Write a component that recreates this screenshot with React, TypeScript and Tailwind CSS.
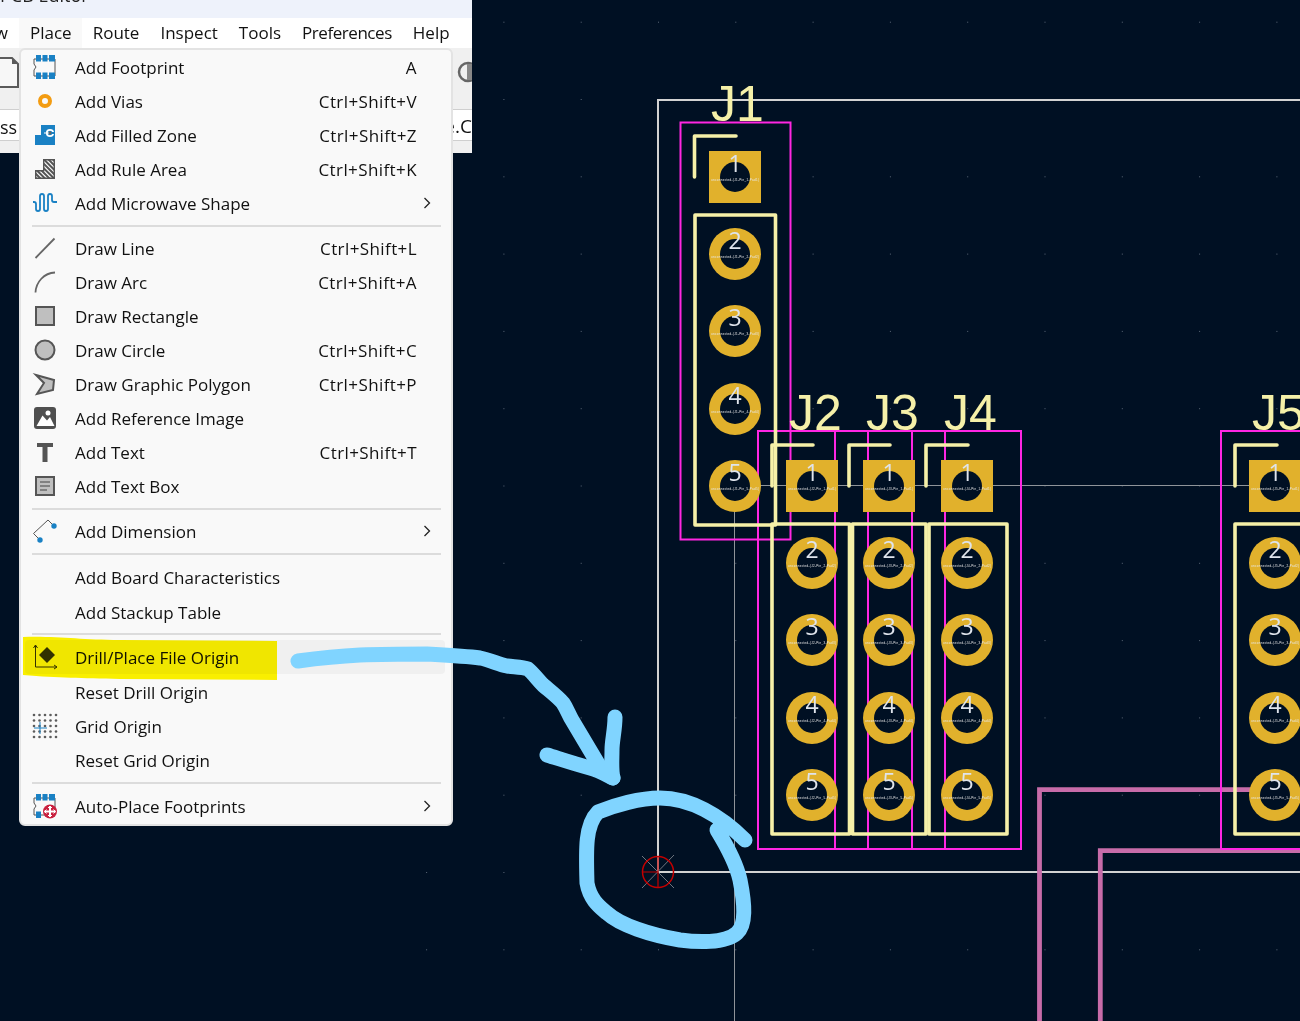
const FONT = "font-['Open_Sans',sans-serif]";

type Row = { label: string; keys?: string; icon?: string; arrow?: boolean; hot?: boolean };

const groups: Row[][] = [
  [
    { label: "Add Footprint", keys: "A", icon: "footprint" },
    { label: "Add Vias", keys: "Ctrl+Shift+V", icon: "via" },
    { label: "Add Filled Zone", keys: "Ctrl+Shift+Z", icon: "zone" },
    { label: "Add Rule Area", keys: "Ctrl+Shift+K", icon: "rule" },
    { label: "Add Microwave Shape", icon: "wave", arrow: true },
  ],
  [
    { label: "Draw Line", keys: "Ctrl+Shift+L", icon: "line" },
    { label: "Draw Arc", keys: "Ctrl+Shift+A", icon: "arc" },
    { label: "Draw Rectangle", icon: "rect" },
    { label: "Draw Circle", keys: "Ctrl+Shift+C", icon: "circle" },
    { label: "Draw Graphic Polygon", keys: "Ctrl+Shift+P", icon: "poly" },
    { label: "Add Reference Image", icon: "image" },
    { label: "Add Text", keys: "Ctrl+Shift+T", icon: "text" },
    { label: "Add Text Box", icon: "textbox" },
  ],
  [{ label: "Add Dimension", icon: "dim", arrow: true }],
  [{ label: "Add Board Characteristics" }, { label: "Add Stackup Table" }],
  [
    { label: "Drill/Place File Origin", icon: "drill", hot: true },
    { label: "Reset Drill Origin" },
    { label: "Grid Origin", icon: "grid" },
    { label: "Reset Grid Origin" },
  ],
  [{ label: "Auto-Place Footprints", icon: "auto", arrow: true }],
];

function MenuIcon({ name }: { name?: string }) {
  const gray = "#555";
  const blue = "#1a81c4";
  const gridAt = [2, 7.5, 13, 18.5, 24];
  const hatch = [-22, -17.5, -13, -8.5, -4, 0.5, 5, 9.5, 14, 18.5];
  return (
    <svg width="26" height="26" viewBox="0 0 26 26">
      {(name === "footprint" || name === "auto") && (
        <>
          <path d="M2 5h21v17H2v-6l2-3-2-3z" fill="none" stroke={gray} strokeWidth="1" />
          <path d="M4 1h5v6.500H4zM10.500 1h5v6.500h-5zM17 1h6v6.500h-6zM4 18.500h5V25H4z" fill={blue} />
          {name === "footprint" && <path d="M10.500 18.500h5V25h-5zM17 18.500h6V25h-6z" fill={blue} />}
          {name === "auto" && (
            <>
              <circle cx="18" cy="18.500" r="7" fill="#c9213f" />
              <path d="M18 13v11M12.500 18.500h11" stroke="#fff" strokeWidth="2" />
              <path d="M16 15l2-2 2 2M16 22l2 2 2-2M14.500 16.500l-2 2 2 2M21.500 16.500l2 2-2 2" fill="none" stroke="#fff" strokeWidth="1" />
            </>
          )}
        </>
      )}
      {name === "via" && <circle cx="13" cy="13" r="5" fill="none" stroke="#f39c12" strokeWidth="4" />}
      {name === "zone" && (
        <>
          <path d="M3 23V13h6V3h14v20z" fill={blue} />
          <circle cx="18" cy="11" r="3.200" fill="none" stroke="#fff" strokeWidth="1.800" />
          <rect x="20" y="10" width="3" height="2" fill={blue} />
          <path d="M12 11h6" stroke="#fff" strokeWidth="1" />
          <circle cx="18" cy="11" r="1.400" fill="#666" />
        </>
      )}
      {name === "rule" && (
        <>
          <clipPath id="rule-clip">
            <path d="M3 23V14h8V3h12v20z" />
          </clipPath>
          <rect x="3" y="3" width="20" height="20" fill="#fff" clipPath="url(#rule-clip)" />
          <g clipPath="url(#rule-clip)" stroke={gray} strokeWidth="2">
            {hatch.map((c) => (
              <path key={c} d={`M0 ${c}L26 ${c + 26}`} />
            ))}
          </g>
          <path d="M3.700 22.300V14.700h8V3.700h10.600v18.600z" fill="none" stroke={gray} strokeWidth="1.400" />
        </>
      )}
      {name === "wave" && (
        <path d="M1 12h1q2 0 2 2v5q0 2 2 2t2-2V6q0-2 2-2t2 2v13q0 2 2 2t2-2V6q0-2 2-2t2 2v4q0 2 2 2h3" fill="none" stroke={blue} strokeWidth="1.800" />
      )}
      {name === "line" && <path d="M3.500 23L22.500 3.500" stroke="#666" strokeWidth="1.800" />}
      {name === "arc" && <path d="M3.500 23.500C4 13 12 4 23 3.500" fill="none" stroke="#666" strokeWidth="1.800" />}
      {name === "rect" && <rect x="4" y="4" width="18" height="18" fill="#bfbfbf" stroke={gray} strokeWidth="2" />}
      {name === "circle" && <circle cx="13" cy="13" r="9.500" fill="#bfbfbf" stroke={gray} strokeWidth="2" />}
      {name === "poly" && <path d="M4 4L22 9l-1 10-16 4 7-11z" fill="#bfbfbf" stroke={gray} strokeWidth="2" />}
      {name === "image" && (
        <>
          <rect x="2" y="2" width="22" height="22" rx="3" fill="#4f4f4f" />
          <path d="M4.500 21L10.500 10.500l4.500 5 3-3.500 4.500 9z" fill="#fff" />
          <circle cx="16" cy="8" r="2.500" fill="#fff" />
        </>
      )}
      {name === "text" && <path d="M5 4h16v4h-5.500v15h-5V8H5z" fill={gray} />}
      {name === "textbox" && (
        <>
          <rect x="4" y="4" width="18" height="18" fill="#bfbfbf" stroke={gray} strokeWidth="2" />
          <path d="M8 9h10M8 13h10M8 17h7" stroke="#444" strokeWidth="1.200" />
        </>
      )}
      {name === "dim" && (
        <>
          <path d="M16 2L1.500 15.500 8 22M16 2l6 6" fill="none" stroke={gray} strokeWidth="1" />
          <circle cx="22" cy="8" r="2.700" fill={blue} />
          <circle cx="8" cy="22" r="2.700" fill={blue} />
        </>
      )}
      {name === "drill" && (
        <>
          <path d="M3.500 1v22H25" fill="none" stroke="#333" strokeWidth="1" />
          <path d="M1.500 4l2-3 2 3M22 21l3 2-3 2" fill="none" stroke="#333" strokeWidth="1" />
          <path d="M15 3l8 8-8 8-8-8z" fill="#333" />
        </>
      )}
      {name === "grid" && (
        <>
          {gridAt.map((x) =>
            gridAt.map((y) => <circle key={`${x}-${y}`} cx={x} cy={y} r="1.300" fill="#5c5c5c" />),
          )}
          <path d="M8 9v12M2 15h13" stroke={blue} strokeWidth="1" />
        </>
      )}
    </svg>
  );
}

function MenuRow({ row, tall }: { row: Row; tall: boolean }) {
  return (
    <div className={`flex items-center pl-[3px] pr-[14px] ml-1 mr-[6px] rounded ${tall ? "h-[34.4px]" : "h-[34px]"} ${row.hot ? "bg-[#f0f0f0]" : ""}`}>
      <div className="w-[34px] h-[26px] flex justify-center items-center">{row.icon && <MenuIcon name={row.icon} />}</div>
      <span className="ml-[13px] mt-[2px] flex-1 whitespace-nowrap">{row.label}</span>
      {row.keys && <span className="mr-[14px] mt-[2px] tracking-[0.4px]">{row.keys}</span>}
      {row.arrow && (
        <svg width="10" height="14" viewBox="0 0 10 14" className="mr-[-1px]">
          <path d="M2.500 2l5 5-5 5" fill="none" stroke="#222" strokeWidth="1.300" />
        </svg>
      )}
    </div>
  );
}

function PopupMenu() {
  return (
    <div className={`absolute left-[19px] top-[48px] w-[434px] h-[778px] bg-[#f9f9f9] border-2 border-[#e3e3e3] rounded-[6px] text-[17px] text-[#111] ${FONT}`}>
      {groups.map((group, i) => (
        <div key={i}>
          {i > 0 && (
            <div className={`${i === 3 ? "h-[12px]" : "h-[11px]"} flex items-center pl-[11px] pr-[10px]`}>
              <div className="h-[2px] w-full bg-[#dcdcdc]" />
            </div>
          )}
          {group.map((row) => (
            <MenuRow key={row.label} row={row} tall={i > 2} />
          ))}
        </div>
      ))}
    </div>
  );
}

function AppWindow() {
  const menus = ["Place", "Route", "Inspect", "Tools", "Preferences", "Help"];
  return (
    <div className={`absolute left-0 top-0 w-[472px] h-[153px] flex flex-col bg-[#f0f0f0] overflow-hidden text-[17px] text-[#111] ${FONT}`}>
      <div className="h-[18px] bg-[#eef2fb] flex items-end overflow-hidden">
        <span className="text-[18px] leading-none mb-[14px] text-[#222] whitespace-nowrap">PCB Editor</span>
      </div>
      <div className="h-[30px] bg-white flex items-center relative">
        <span className="w-[19px] shrink-0 overflow-hidden flex justify-end pr-[11px]">w</span>
        <div className="flex shrink-0">
          {menus.map((m) => (
            <span
              key={m}
              className={`px-[10.5px] h-[30px] flex items-center ${m === "Place" ? "bg-[#f9f9f9] pl-[11px]" : ""} ${m === "Preferences" ? "tracking-[-0.45px]" : ""}`}
            >
              {m}
            </span>
          ))}
        </div>
      </div>
      <div className="relative flex-1">
        {/* toolbar stubs and the tab strip, mostly hidden behind the menu */}
        <svg width="20" height="34" viewBox="0 0 20 34" className="absolute left-0 top-[9px]">
          <path d="M-4 1h16l6 6v23H-4z" fill="#f7f7f7" stroke="#5a5a5a" strokeWidth="2" />
          <path d="M12 1l6 6h-6z" fill="#5a5a5a" />
        </svg>
        <div className="absolute left-0 top-[61px] w-[20px] h-[32px] bg-white border-y border-[#cfcfcf] text-[18px] leading-[34px] whitespace-nowrap overflow-hidden">ss</div>
        <div className="absolute left-[453px] top-[61px] w-[19px] h-[32px] bg-white border-y border-[#cfcfcf] text-[19px] leading-[32px] flex justify-end whitespace-nowrap overflow-hidden">e.C</div>
        <svg width="19" height="30" viewBox="0 0 19 30" className="absolute left-[453px] top-[9px]">
          <circle cx="15" cy="15" r="9" fill="none" stroke="#666" strokeWidth="2.500" />
          <rect x="14" y="7" width="5" height="16" fill="#888" />
        </svg>
      </div>
    </div>
  );
}

const X = (k: number) => 658 + k * 77.3;
const Y = (k: number) => 872 - k * 77.3;
const SILK = "#f5f0a8";
const PAD = "#e1b12c";
const BG = "#001023";
const COURT = "#ff26e2";

function Part({ name, x, y }: { name: string; x: number; y: number }) {
  const rows = [0, 77, 154, 232, 309];
  return (
    <g>
      {rows.map((dy, i) => {
        const cy = y + dy;
        return (
          <g key={i}>
            {i === 0 ? <rect x={x - 26} y={cy - 26} width="52" height="52" fill={PAD} /> : <circle cx={x} cy={cy} r="26" fill={PAD} />}
            <circle cx={x} cy={cy} r="15" fill={BG} />
            <text x={x} y={cy - 5} textAnchor="middle" fontSize="23" fontFamily="'Open Sans', sans-serif" fill="#dfe4ec">
              {i + 1}
            </text>
            <text x={x} y={cy + 4} textAnchor="middle" fontSize="3" textLength="48" lengthAdjust="spacing" fontFamily="'Liberation Sans', sans-serif" fill="#e8e8e8">
              {`unconnected-(${name}-Pin_${i + 1}-Pad${i + 1})`}
            </text>
          </g>
        );
      })}
    </g>
  );
}

function Board() {
  const dots: { x: number; y: number }[] = [];
  for (let i = -3; i < 9; i++) for (let j = -2; j < 12; j++) dots.push({ x: X(i), y: Y(j) });
  const silk = { fill: "none", stroke: SILK, strokeWidth: 3.6, strokeLinecap: "round" as const, strokeLinejoin: "round" as const };
  return (
    <svg width="1300" height="1021" viewBox="0 0 1300 1021" className="absolute left-0 top-0">
      {dots.map((d, i) => (
        <rect key={i} x={d.x} y={d.y} width="1" height="1" fill="#5b6878" />
      ))}

      {/* thin centre lines */}
      <path d="M734.500 485.500H1300M734.500 485.500V1021" fill="none" stroke="#8f9499" strokeWidth="1" />
      {/* board edge */}
      <path d="M1300 100H658V872H1300" fill="none" stroke="#d2d2d2" strokeWidth="2" />

      {/* traces */}
      <path d="M1275 789.700H1039.500V1021M1300 850.700H1100.300V1021" fill="none" stroke="#c76ca9" strokeWidth="4.800" />

      {/* courtyards */}
      <g fill="none" stroke={COURT} strokeWidth="2">
        <rect x="680.500" y="122.500" width="110" height="417" />
        <rect x="758" y="431" width="110" height="418" />
        <rect x="835" y="431" width="110" height="418" />
        <rect x="912" y="431" width="109" height="418" />
        <rect x="1221" y="431" width="110" height="418" />
      </g>

      <Part name="J1" x={735} y={177} />
      <Part name="J2" x={812} y={486} />
      <Part name="J3" x={889} y={486} />
      <Part name="J4" x={967} y={486} />
      <Part name="J5" x={1275} y={486} />

      {/* silkscreen */}
      <g {...silk}>
        <path d="M694.500 177V136H736" />
        <rect x="695" y="215" width="80.500" height="310" />
        <path d="M772 486V445H813" />
        <path d="M849 486V445H890" />
        <path d="M926 486V445H968" />
        <path d="M1235 486V445H1277" />
        <rect x="772" y="524" width="77.500" height="310" />
        <rect x="852.500" y="524" width="73.500" height="310" />
        <rect x="929" y="524" width="78" height="310" />
        <path d="M1340 524H1235V834H1340" />
      </g>
      <g fontFamily="'Liberation Sans', sans-serif" fontSize="50" fill={SILK}>
        <text x="711" y="121">J1</text>
        <text x="789" y="430">J2</text>
        <text x="866" y="430">J3</text>
        <text x="944" y="430">J4</text>
        <text x="1252" y="430">J5</text>
      </g>

      {/* drill origin marker */}
      <path d="M642 856l32 32M674 855l-32 33" stroke="#6f7680" strokeWidth="1" />
      <circle cx="658" cy="872" r="15.500" fill="none" stroke="#c40000" strokeWidth="1.500" />
      <path d="M658 856v32M642 872h16" stroke="#c40000" strokeWidth="1.200" />
    </svg>
  );
}

function Annotations() {
  const ink = { fill: "none", stroke: "#80d4ff", strokeWidth: 15, strokeLinecap: "round" as const, strokeLinejoin: "round" as const };
  return (
    <svg width="1300" height="1021" viewBox="0 0 1300 1021" className="absolute left-0 top-0">
      <path
        d="M23 637C60 636 80 640 120 640L277 641V680L120 679C80 678 60 678 23 675Z"
        fill="#fff500"
        className="mix-blend-multiply"
      />
      <g {...ink}>
        <path d="M298 661C320 658 340 656 360 655C385 654 405 654 427 654C445 655 465 656 480 658C490 660 498 664 507 666C515 667 523 667 528 669C533 673 538 680 543 685C550 691 558 697 563 703C567 709 569 715 572 720L600 767L613 778" />
        <path d="M615 717C615 730 612 740 612 750C612 760 611 770 613 778C605 774 598 770 590 768C575 764 560 759 547 755" />
        <path d="M745 840C720 815 690 798 660 798C640 798 615 805 598 812C585 825 586 850 587 883C590 900 600 907 607 913C620 925 650 935 680 940C695 942 725 944 737 933C746 925 745 905 740 880C736 862 725 843 717 830" />
      </g>
    </svg>
  );
}

export default function App() {
  return (
    <div className="relative w-[1300px] h-[1021px] bg-[#001023] overflow-hidden">
      <Board />
      <AppWindow />
      <PopupMenu />
      <Annotations />
    </div>
  );
}
